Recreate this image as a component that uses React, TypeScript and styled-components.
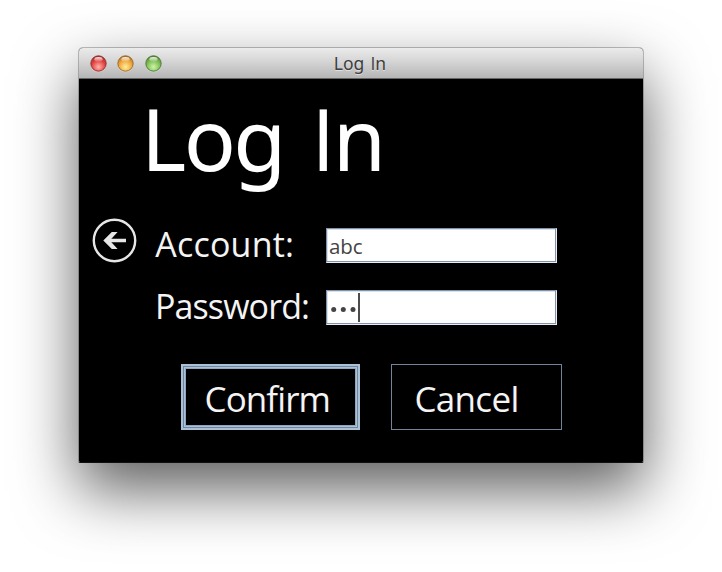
import React from 'react';
import styled, { createGlobalStyle } from 'styled-components';

const GlobalStyle = createGlobalStyle`
  * { box-sizing: border-box; }
  body {
    margin: 0;
    background: #fff;
    overflow: hidden;
    font-family: 'Open Sans', 'Noto Sans', sans-serif;
  }
`;

const Desktop = styled.main`
  width: 722px;
  height: 572px;
  padding: 47px 78px;
  overflow: hidden;
`;

const Window = styled.section`
  width: 566px;
  height: 416px;
  border: 1px solid rgba(0, 0, 0, 0.24);
  border-bottom-color: #111;
  border-radius: 5px 5px 2px 2px;
  background: #000;
  background-clip: padding-box;
  overflow: hidden;
  box-shadow: 0 27px 62px rgba(0, 0, 0, 0.63);
`;

const TitleBar = styled.header`
  height: 31px;
  display: grid;
  grid-template-columns: 100px 1fr 100px;
  background: linear-gradient(#ebebeb, #d5d5d5 45%, #b5b5b5);
  border-bottom: 1px solid #666;
`;

const Lights = styled.div`
  display: flex;
  gap: 10.5px;
  padding: 6px 0 0 10.7px;
`;

const LightIcon = styled.svg`
  width: 17px;
  height: 19px;
  flex: none;
`;

const WindowTitle = styled.div`
  text-align: center;
  font-family: 'Noto Sans', sans-serif;
  font-size: 17.5px;
  line-height: 30px;
  word-spacing: 1.5px;
  padding-right: 2px;
  color: #3d3d3d;
  text-shadow: 0 1px 0 rgba(255, 255, 255, 0.5);
`;

const PlainCapital = styled.span`
  font-family: 'Open Sans', sans-serif;
`;

const Content = styled.div`
  padding-top: 9px;
  color: #f4f4f4;
`;

const Heading = styled.h1`
  margin: 0 0 0 62px;
  height: 140px;
  font-family: 'Noto Sans', sans-serif;
  font-size: 86.4px;
  line-height: 100px;
  font-weight: 400;
  letter-spacing: -2.6px;
  word-spacing: 7.5px;
  color: #fff;
`;

const FormArea = styled.div`
  display: flex;
`;

const BackButton = styled.button`
  width: 46px;
  height: 46px;
  margin: -10px 18px 0 12px;
  padding: 0;
  border: 0;
  background: none;
  svg { display: block; }
`;

const Fields = styled.div`
  display: grid;
  row-gap: 27px;
`;

const Field = styled.label`
  display: grid;
  grid-template-columns: 171px 231px;
  grid-template-rows: 35px;
  height: 35px;
`;

const Label = styled.span<{ $tracking: number; $indent: number }>`
  padding-left: ${p => p.$indent}px;
  font-size: 34px;
  line-height: 33px;
  letter-spacing: ${p => p.$tracking}px;
  white-space: nowrap;
`;

const TextBox = styled.span`
  display: flex;
  align-items: center;
  border: 1px solid #8193a8;
  border-right-color: #e8eef4;
  border-bottom-color: #e8eef4;
  box-shadow: inset -1px -1px 0 #8193a8, inset 1px 1px 0 #d9e2eb;
  background: #fff;
  padding: 2px;
  color: #444;
  font-size: 20.5px;
  line-height: 26px;
`;

const Value = styled.span`
  padding-top: 1px;
  letter-spacing: -0.1px;
`;

const Dots = styled.svg`
  width: 29px;
  height: 29px;
`;

const Caret = styled.span`
  width: 2px;
  height: 29px;
  background: #4c4c4c;
`;

const Actions = styled.div`
  display: flex;
  gap: 31px;
  margin: 39px 0 0 102px;
`;

const ActionButton = styled.button<{ $focused?: boolean }>`
  width: ${p => (p.$focused ? 179 : 171)}px;
  height: 66px;
  padding: 3px 0 0 ${p => (p.$focused ? 21.5 : 22.5)}px;
  border: ${p => (p.$focused ? '2px solid #a9c0d7' : '1px solid #728498')};
  box-shadow: ${p =>
    p.$focused
      ? 'inset 0 0 0 1px #71869b, inset 0 0 0 2px #a9c0d7, inset 0 0 0 3px #8da5bf'
      : 'none'};
  background: #000;
  color: #f4f4f4;
  font: 400 35px/58px 'Open Sans', 'Noto Sans', sans-serif;
  letter-spacing: ${p => (p.$focused ? -0.9 : -0.7)}px;
  font-variant-ligatures: none;
  text-align: left;
`;

type LightColors = { id: string; edge: string; mid: string; glow: string };

const lights: LightColors[] = [
  { id: 'close', edge: '#8f2b2b', mid: '#e4423f', glow: '#ffb4ad' },
  { id: 'minimize', edge: '#986323', mid: '#eea63a', glow: '#ffee9a' },
  { id: 'zoom', edge: '#45762f', mid: '#7fbe56', glow: '#ccf5a5' },
];

function Light({ id, edge, mid, glow }: LightColors) {
  return (
    <LightIcon viewBox="0 0 17 19" aria-label={id}>
      <defs>
        <radialGradient id={id} cx=".5" cy=".72" r=".78">
          <stop offset="0" stopColor={glow} />
          <stop offset=".55" stopColor={mid} />
          <stop offset="1" stopColor={edge} />
        </radialGradient>
        <linearGradient id={`${id}-shine`} x2="0" y2="1">
          <stop stopColor="#fff" stopOpacity=".9" />
          <stop offset="1" stopColor="#fff" stopOpacity=".1" />
        </linearGradient>
      </defs>
      <circle cx="8.5" cy="10.3" r="8" fill="#fff" opacity=".45" />
      <circle cx="8.5" cy="9.5" r="7.7" fill={`url(#${id})`} stroke={edge} strokeWidth=".9" />
      <ellipse cx="8.5" cy="5.3" rx="4.1" ry="2.3" fill={`url(#${id}-shine)`} />
    </LightIcon>
  );
}

export default function App() {
  return (
    <>
      <GlobalStyle />
      <Desktop>
        <Window>
          <TitleBar>
            <Lights>
              {lights.map(light => (
                <Light key={light.id} {...light} />
              ))}
            </Lights>
            <WindowTitle>Log <PlainCapital>I</PlainCapital>n</WindowTitle>
          </TitleBar>
          <Content>
            <Heading>Log <PlainCapital>I</PlainCapital>n</Heading>
            <FormArea>
              <BackButton aria-label="Back">
                <svg width="46" height="46" viewBox="0 0 46 46" fill="none" stroke="#e6e6e6">
                  <circle cx="23.5" cy="22.5" r="20.7" strokeWidth="2.4" />
                  <path d="M35 22.5H15" strokeWidth="3.6" />
                  <path d="M20.8 14H26.6L18.8 22.5L26.6 31H20.8L12.3 22.5Z" fill="#e6e6e6" stroke="none" />
                </svg>
              </BackButton>
              <Fields>
                <Field>
                  <Label $tracking={0.2} $indent={0.3}>Account:</Label>
                  <TextBox>
                    <Value>abc</Value>
                  </TextBox>
                </Field>
                <Field>
                  <Label $tracking={-0.9} $indent={0}>Password:</Label>
                  <TextBox>
                    <Dots viewBox="0 0 29 29" fill="#444">
                      <circle cx="4.7" cy="16.5" r="2.5" />
                      <circle cx="14.3" cy="16.5" r="2.5" />
                      <circle cx="24" cy="16.5" r="2.5" />
                    </Dots>
                    <Caret />
                  </TextBox>
                </Field>
              </Fields>
            </FormArea>
            <Actions>
              <ActionButton $focused>Confirm</ActionButton>
              <ActionButton>Cancel</ActionButton>
            </Actions>
          </Content>
        </Window>
      </Desktop>
    </>
  );
}
